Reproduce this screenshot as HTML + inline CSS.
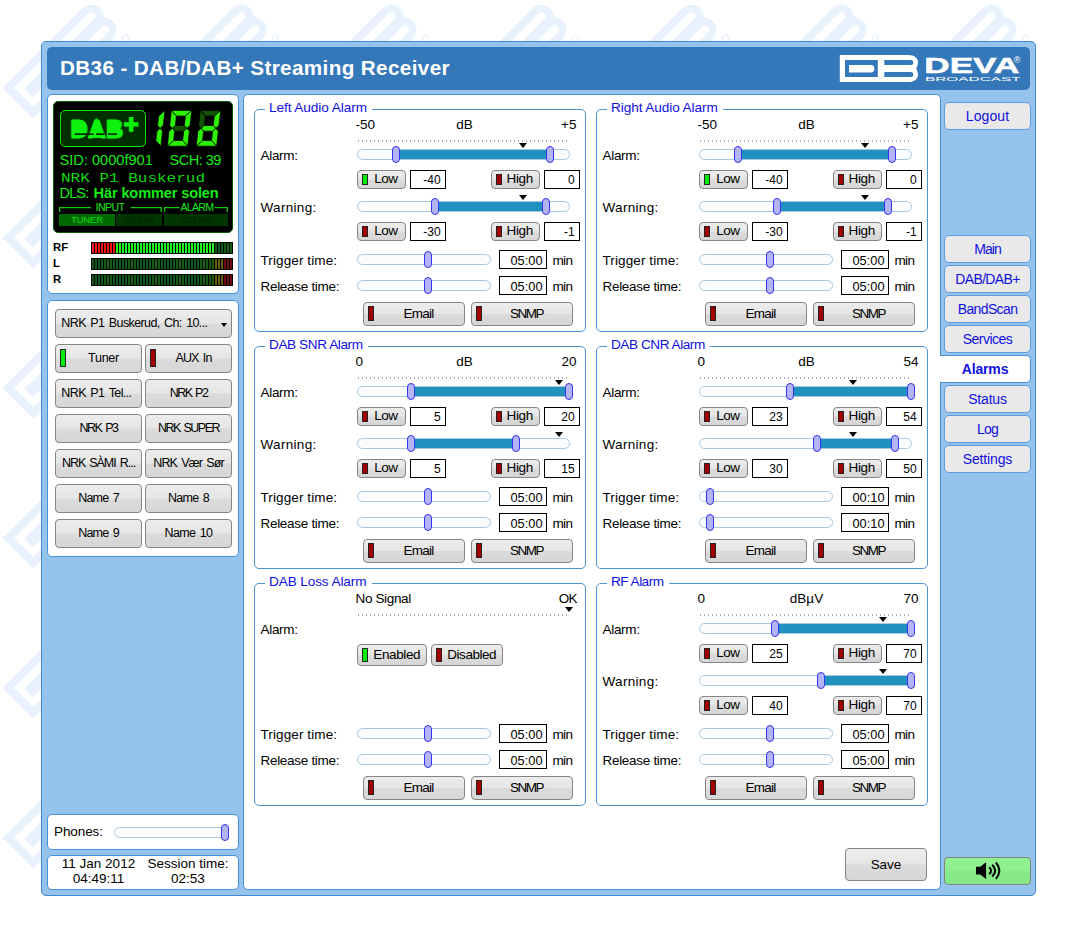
<!DOCTYPE html>
<html lang="en"><head><meta charset="utf-8"><title>DB36 - DAB/DAB+ Streaming Receiver</title>
<style>
*{box-sizing:border-box;margin:0;padding:0}
html,body{width:1077px;height:937px;overflow:hidden;background:#fff}
body{position:relative;font-family:"Liberation Sans",sans-serif;font-size:13.5px;color:#000}
.abs{position:absolute}
.t{position:absolute;white-space:pre;line-height:1}
#wm{position:absolute;left:0;top:0;width:1077px;height:937px}
#frame{position:absolute;left:41px;top:41px;width:995px;height:855px;background:#94c3ec;border:1px solid #4389cf;border-radius:5px}
#hdr{position:absolute;left:47px;top:47px;width:983px;height:43px;background:#3578b9;border-radius:5px}
.panel{position:absolute;background:#fff;border:1px solid #4a90d8;border-radius:5px}
.fs{position:absolute;border:1px solid #4f94d4;border-radius:5px;width:332px;height:223px}
.leg{position:absolute;top:-10.5px;left:10px;height:16px;background:#fff;color:#1010e0;font-size:13.6px;line-height:16px;padding:0 5px 0 4px;white-space:pre}
.btn{position:absolute;border:1px solid #858585;border-radius:4px;background:linear-gradient(#ececec 0%,#e6e6e6 49%,#dbdbdb 51%,#d6d6d6 100%);text-align:center;white-space:pre;overflow:hidden}
.nav{position:absolute;left:944px;width:87px;height:28px;border:1px solid #5d9ce2;border-radius:5px;background:#e9e9e9;color:#1010e0;text-align:center;font-size:14px;line-height:27px;white-space:pre}
.led{position:absolute;border:1px solid #222}
.lg{background:#06ee06}
.lr{background:#a00000}
.track{position:absolute;height:10.5px;margin-top:.3px;border:1px solid #a6c9e2;border-radius:6px;background:#fbfcfd}
.range{position:absolute;height:8.6px;margin-top:.2px;background:#2191c0}
.hnd{position:absolute;width:8px;height:17px;margin-top:-.4px;border:1px solid #3535f0;border-radius:4px;background:#b4b4f8}
.val{position:absolute;border:1px solid #000;background:#fff;height:19px;text-align:right;font-size:12px;line-height:19px;padding-right:4.4px;white-space:pre}
.dots{position:absolute;height:2px;width:210px;background:repeating-linear-gradient(90deg,#555 0,#555 1px,transparent 1px,transparent 4px);opacity:.5}
.mk{position:absolute;width:0;height:0;border-left:4px solid transparent;border-right:4px solid transparent;border-top:5px solid #000}
.lab{position:absolute;white-space:pre;line-height:16px;height:16px}
</style></head>
<body>
<svg id="wm" width="1077" height="937" viewBox="0 0 1077 937">
<defs><pattern id="wmp" x="0" y="0" width="150" height="150" patternUnits="userSpaceOnUse">
<g transform="translate(2.7,88) rotate(-45) scale(1.6) translate(-839.8,-55)" fill="#e9f1fd">
<path fill-rule="evenodd" d="M839.8,55 H908.5 C914.5,55 918,58.3 918,62.3 C918,65.2 916.9,67.2 916.2,68.5 C916.9,69.8 918,71.8 918,74.7 C918,78.7 914.5,82 908.5,82 H839.8 Z M845,60 V76.9 H877.8 V60 Z M884.3,60 V65 H910.8 a2.5,2.5 0 0 0 0,-5 Z M884.3,71.9 V76.9 H910.8 a2.5,2.5 0 0 0 0,-5 Z"/>
<path d="M849,64.9 H870.6 a3.75,3.75 0 0 1 0,7.5 H849 Z"/>
<circle cx="916" cy="87.2" r="2" fill="none" stroke="#e9f1fd" stroke-width="0.7"/>
</g></pattern></defs>
<rect width="1046" height="896" fill="url(#wmp)"/></svg>
<div id="frame"></div>
<div id="hdr"></div>
<div class="t" id="title" style="left:60px;top:56px;font-size:20.7px;font-weight:bold;color:#fff;line-height:24px;letter-spacing:0.36px">DB36 - DAB/DAB+ Streaming Receiver</div>
<svg class="abs" style="left:836px;top:50px" width="192" height="38" viewBox="836 50 192 38">
<g fill="#fff">
<path fill-rule="evenodd" d="M839.8,55 H908.5 C914.5,55 918,58.3 918,62.3 C918,65.2 916.9,67.2 916.2,68.5 C916.9,69.8 918,71.8 918,74.7 C918,78.7 914.5,82 908.5,82 H839.8 Z M845,60 V76.9 H877.8 V60 Z M884.3,60 V65 H910.8 a2.5,2.5 0 0 0 0,-5 Z M884.3,71.9 V76.9 H910.8 a2.5,2.5 0 0 0 0,-5 Z"/>
<path d="M849,64.9 H870.6 a3.75,3.75 0 0 1 0,7.5 H849 Z"/>
<text x="924.3" y="72.6" font-family="Liberation Sans, sans-serif" font-weight="bold" font-size="22.9" stroke="#fff" stroke-width="0.5" textLength="95" lengthAdjust="spacingAndGlyphs">DEVA</text>
<text x="1013.8" y="62.8" font-family="Liberation Sans, sans-serif" font-size="9.2">®</text>
<text x="925" y="81.3" font-family="Liberation Sans, sans-serif" font-size="5.6" textLength="95.6" lengthAdjust="spacingAndGlyphs">BROADCAST</text>
</g></svg>
<div class="panel" style="left:47px;top:94px;width:192px;height:200px"></div>
<div class="abs" style="left:53px;top:101px;width:180px;height:132px;background:#000;border:1px solid #0a5a0a;border-radius:5px"></div>
<div class="abs" style="left:60px;top:110px;width:86px;height:37px;background:#003000;border:1px solid #10e010;border-radius:5px"></div>
<svg class="abs" style="left:60px;top:110px" width="86" height="37" viewBox="60 110 86 37">
<g fill="#0cf20c"><rect x="73" y="122" width="11" height="14"/><rect x="109" y="122" width="11" height="14"/><path d="M96.3,117.8 L106.2,137.9 H87.8 Z"/></g>
<text x="70.2" y="137.8" font-family="Liberation Sans, sans-serif" font-weight="bold" font-size="25" fill="#0cf20c" stroke="#0cf20c" stroke-width="1" stroke-linejoin="round" textLength="53.2" lengthAdjust="spacingAndGlyphs">DAB</text>
<g fill="#002c00"><rect x="74.9" y="133.3" width="12.1" height="1.7"/><rect x="88.7" y="133.3" width="4.9" height="1.7"/><rect x="96.3" y="133.3" width="8" height="1.7"/><rect x="107.9" y="133.3" width="8.9" height="1.7"/></g>
<text x="131.1" y="132.6" text-anchor="middle" font-family="Liberation Sans, sans-serif" font-weight="bold" font-size="25.5" fill="#0cf20c" stroke="#0cf20c" stroke-width="1.5">+</text>
</svg>
<svg class="abs" style="left:150px;top:106px" width="80" height="46" viewBox="150 106 80 46" role="img" aria-label="10d"><g transform="translate(140.5,146.2) skewX(-6.5) translate(0,-35.8)" stroke="#000" stroke-width="0.7" stroke-linejoin="round"><path d="M20.40,0.00 L14.70,5.70 L14.70,15.05 L17.55,17.90 L20.40,15.05 Z" fill="#2cf000"/><path d="M20.40,35.80 L14.70,30.10 L14.70,20.75 L17.55,17.90 L20.40,20.75 Z" fill="#2cf000"/></g><g transform="translate(167.3,146.2) skewX(-6.5) translate(0,-35.8)" stroke="#000" stroke-width="0.7" stroke-linejoin="round"><path d="M2.85,17.90 L5.70,15.05 L14.70,15.05 L17.55,17.90 L14.70,20.75 L5.70,20.75 Z" fill="#125200"/><path d="M0.00,0.00 L20.40,0.00 L14.70,5.70 L5.70,5.70 Z" fill="#2cf000"/><path d="M20.40,0.00 L14.70,5.70 L14.70,15.05 L17.55,17.90 L20.40,15.05 Z" fill="#2cf000"/><path d="M20.40,35.80 L14.70,30.10 L14.70,20.75 L17.55,17.90 L20.40,20.75 Z" fill="#2cf000"/><path d="M0.00,35.80 L20.40,35.80 L14.70,30.10 L5.70,30.10 Z" fill="#2cf000"/><path d="M0.00,35.80 L5.70,30.10 L5.70,20.75 L2.85,17.90 L0.00,20.75 Z" fill="#2cf000"/><path d="M0.00,0.00 L5.70,5.70 L5.70,15.05 L2.85,17.90 L0.00,15.05 Z" fill="#2cf000"/></g><g transform="translate(196.2,146.2) skewX(-6.5) translate(0,-35.8)" stroke="#000" stroke-width="0.7" stroke-linejoin="round"><path d="M0.00,0.00 L20.40,0.00 L14.70,5.70 L5.70,5.70 Z" fill="#125200"/><path d="M0.00,0.00 L5.70,5.70 L5.70,15.05 L2.85,17.90 L0.00,15.05 Z" fill="#125200"/><path d="M20.40,0.00 L14.70,5.70 L14.70,15.05 L17.55,17.90 L20.40,15.05 Z" fill="#2cf000"/><path d="M20.40,35.80 L14.70,30.10 L14.70,20.75 L17.55,17.90 L20.40,20.75 Z" fill="#2cf000"/><path d="M0.00,35.80 L20.40,35.80 L14.70,30.10 L5.70,30.10 Z" fill="#2cf000"/><path d="M0.00,35.80 L5.70,30.10 L5.70,20.75 L2.85,17.90 L0.00,20.75 Z" fill="#2cf000"/><path d="M2.85,17.90 L5.70,15.05 L14.70,15.05 L17.55,17.90 L14.70,20.75 L5.70,20.75 Z" fill="#2cf000"/></g></svg>
<div class="t" id="sid" style="left:59.5px;top:152px;font-size:14.6px;line-height:16px;color:#14ea14">SID: 0000f901</div>
<div class="t" id="sch" style="left:169.5px;top:152px;font-size:14.6px;line-height:16px;letter-spacing:-0.55px;color:#14ea14">SCH: 39</div>
<div class="t" id="svc" style="left:61px;top:170px;font-family:'Liberation Mono',monospace;font-size:16px;line-height:17px;transform-origin:0 12.6px;transform:scaleY(.82);color:#10d810">NRK P1 Buskerud</div>
<div class="t" id="dls" style="left:59.5px;top:185px;font-size:14.6px;line-height:16px;color:#14ea14"><span style="letter-spacing:-0.9px">DLS:</span> <b id="dlsb" style="letter-spacing:-0.15px;margin-left:1.2px">Här kommer solen</b></div>
<svg class="abs" style="left:55px;top:204px" width="178" height="10" viewBox="55 204 178 10" fill="none" stroke="#10c810" stroke-width="1.3">
<path d="M59.6,212 V207.7 H91"/><path d="M130.5,207.7 H161.2 V212"/><path d="M164.6,212 V207.7 H179.5"/><path d="M214.5,207.7 H227.2 V212"/></svg>
<div class="t" id="inp" style="left:95.5px;top:201.6px;font-size:10.6px;letter-spacing:-0.55px;line-height:11px;color:#14ea14">INPUT</div>
<div class="t" id="alm" style="left:180.5px;top:201.6px;font-size:10.6px;letter-spacing:-0.75px;line-height:11px;color:#14ea14">ALARM</div>
<div class="abs" id="b_tuner" style="left:59px;top:214px;width:56px;height:12px;background:#006800;color:#10e010;font-size:9.2px;line-height:12.5px;text-align:center;white-space:pre">TUNER</div>
<div class="abs" id="b_aux" style="left:116px;top:214px;width:46px;height:12px;background:#003400;color:#002600;font-size:9.2px;line-height:12.5px;text-align:center;white-space:pre">AUX IN</div>
<div class="abs" id="b_act" style="left:164px;top:214px;width:64px;height:12px;background:#003400;color:#002600;font-size:9.2px;line-height:12.5px;text-align:center;white-space:pre">ACTIVE</div>
<div class="abs" style="left:91px;top:242px;width:142px;height:12px;background:#000"></div><div class="abs" style="left:92px;top:243px;width:24px;height:10px;background:repeating-linear-gradient(90deg,#ff1010 0,#ff1010 2px,#000 2px,#000 3px)"></div><div class="abs" style="left:116px;top:243px;width:99px;height:10px;background:repeating-linear-gradient(90deg,#22ff22 0,#22ff22 2px,#000 2px,#000 3px)"></div><div class="abs" style="left:215px;top:243px;width:18px;height:10px;background:repeating-linear-gradient(90deg,#0e5a0e 0,#0e5a0e 2px,#000 2px,#000 3px)"></div>
<div class="abs" style="left:91px;top:258px;width:142px;height:12px;background:#000"></div><div class="abs" style="left:92px;top:259px;width:123px;height:10px;background:repeating-linear-gradient(90deg,#0e5a0e 0,#0e5a0e 2px,#000 2px,#000 3px)"></div><div class="abs" style="left:215px;top:259px;width:9px;height:10px;background:repeating-linear-gradient(90deg,#6a5a0a 0,#6a5a0a 2px,#000 2px,#000 3px)"></div><div class="abs" style="left:224px;top:259px;width:9px;height:10px;background:repeating-linear-gradient(90deg,#6a0e0e 0,#6a0e0e 2px,#000 2px,#000 3px)"></div>
<div class="abs" style="left:91px;top:274px;width:142px;height:12px;background:#000"></div><div class="abs" style="left:92px;top:275px;width:123px;height:10px;background:repeating-linear-gradient(90deg,#0e5a0e 0,#0e5a0e 2px,#000 2px,#000 3px)"></div><div class="abs" style="left:215px;top:275px;width:9px;height:10px;background:repeating-linear-gradient(90deg,#6a5a0a 0,#6a5a0a 2px,#000 2px,#000 3px)"></div><div class="abs" style="left:224px;top:275px;width:9px;height:10px;background:repeating-linear-gradient(90deg,#6a0e0e 0,#6a0e0e 2px,#000 2px,#000 3px)"></div>
<div class="t" style="left:53px;top:241px;font-size:11.3px;font-weight:bold;line-height:13px">RF</div>
<div class="t" style="left:53px;top:257px;font-size:11.3px;font-weight:bold;line-height:13px">L</div>
<div class="t" style="left:53px;top:273px;font-size:11.3px;font-weight:bold;line-height:13px">R</div>
<div class="panel" style="left:47px;top:300px;width:192px;height:257px"></div>
<div class="btn" style="left:55px;top:309px;width:177px;height:29px;font-size:12.5px;word-spacing:1.6px;letter-spacing:-0.612px;line-height:27px;text-align:left;padding-left:5.3px">NRK P1 Buskerud, Ch: 10...</div>
<div class="mk" style="left:220.5px;top:322.5px;border-left-width:3.5px;border-right-width:3.5px;border-top-width:4.5px"></div>
<div class="btn" style="left:55px;top:344px;width:87px;height:29px;font-size:12.5px;line-height:27px;word-spacing:1.6px;letter-spacing:-0.238px;padding-left:10px;">Tuner</div>
<div class="btn" style="left:145px;top:344px;width:87px;height:29px;font-size:12.5px;line-height:27px;word-spacing:1.6px;letter-spacing:-0.842px;padding-left:10px;">AUX In</div>
<div class="btn" style="left:55px;top:379px;width:87px;height:29px;font-size:12.5px;line-height:27px;word-spacing:1.6px;letter-spacing:-0.605px;text-align:left;padding-left:5.3px;">NRK P1 Tel...</div>
<div class="btn" style="left:145px;top:379px;width:87px;height:29px;font-size:12.5px;line-height:27px;word-spacing:1.6px;letter-spacing:-1.501px;">NRK P2</div>
<div class="btn" style="left:55px;top:414px;width:87px;height:29px;font-size:12.5px;line-height:27px;word-spacing:1.6px;letter-spacing:-1.451px;">NRK P3</div>
<div class="btn" style="left:145px;top:414px;width:87px;height:29px;font-size:12.5px;line-height:27px;word-spacing:1.6px;letter-spacing:-1.505px;">NRK SUPER</div>
<div class="btn" style="left:55px;top:449px;width:87px;height:29px;font-size:12.5px;line-height:27px;word-spacing:1.6px;letter-spacing:-1.024px;">NRK SÀMI R...</div>
<div class="btn" style="left:145px;top:449px;width:87px;height:29px;font-size:12.5px;line-height:27px;word-spacing:1.6px;letter-spacing:-0.904px;">NRK Vær Sør</div>
<div class="btn" style="left:55px;top:484px;width:87px;height:29px;font-size:12.5px;line-height:27px;word-spacing:1.6px;letter-spacing:-0.776px;">Name 7</div>
<div class="btn" style="left:145px;top:484px;width:87px;height:29px;font-size:12.5px;line-height:27px;word-spacing:1.6px;letter-spacing:-0.726px;">Name 8</div>
<div class="btn" style="left:55px;top:519px;width:87px;height:29px;font-size:12.5px;line-height:27px;word-spacing:1.6px;letter-spacing:-0.776px;">Name 9</div>
<div class="btn" style="left:145px;top:519px;width:87px;height:29px;font-size:12.5px;line-height:27px;word-spacing:1.6px;letter-spacing:-0.639px;">Name 10</div>
<div class="led lg" style="left:60px;top:349px;width:6.4px;height:18px"></div>
<div class="led lr" style="left:150px;top:349px;width:6.4px;height:18px"></div>
<div class="panel" style="left:47px;top:814px;width:192px;height:36px"></div>
<div class="lab" style="left:54px;top:823.5px;letter-spacing:-0.091px">Phones:</div>
<div class="track" style="left:114px;top:827px;width:114px"></div><div class="hnd" style="left:221px;top:824px"></div>
<div class="panel" style="left:47px;top:855px;width:192px;height:35px"></div>
<div class="abs" id="dt" style="left:53px;top:856.4px;width:91px;text-align:center;line-height:15px;white-space:pre">11 Jan 2012
04:49:11</div>
<div class="abs" id="st" style="left:143px;top:856.4px;width:90px;text-align:center;line-height:15px;white-space:pre">Session time:
02:53</div>
<div class="panel" style="left:243px;top:94px;width:698px;height:796px"></div>
<div class="fs" style="left:254px;top:109px"><div class="leg" style="width:107px;letter-spacing:-0.067px">Left Audio Alarm</div></div>
<div class="lab" style="left:355.5px;top:117px">-50</div><div class="lab" style="left:414.5px;top:117px;width:100px;text-align:center">dB</div><div class="lab" style="left:476.5px;top:117px;width:100px;text-align:right">+5</div>
<div class="dots" style="left:358px;top:139.8px"></div>
<div class="lab" style="left:260.5px;top:148px;letter-spacing:-0.303px">Alarm:</div>
<div class="track" style="left:357px;top:149px;width:213px"></div><div class="range" style="left:396.4px;top:150px;width:153.5px"></div><div class="hnd" style="left:392.4px;top:146px"></div><div class="hnd" style="left:545.8px;top:146px"></div><div class="mk" style="left:518.5px;top:143px"></div>
<div class="btn" style="left:357px;top:170px;width:49px;height:19px;line-height:16.5px;text-align:left;padding-left:16.2px;letter-spacing:-0.508px">Low</div><div class="led lg" style="left:362px;top:174px;width:6px;height:11px"></div><div class="val" style="left:410px;top:170px;width:36px">-40</div><div class="btn" style="left:491px;top:170px;width:49px;height:19px;line-height:16.5px;text-align:left;padding-left:14.5px;letter-spacing:-0.339px">High</div><div class="led lr" style="left:496px;top:174px;width:6px;height:11px"></div><div class="val" style="left:544px;top:170px;width:36px">0</div>
<div class="lab" style="left:260.5px;top:200px;letter-spacing:0.317px">Warning:</div>
<div class="track" style="left:357px;top:201px;width:213px"></div><div class="range" style="left:434.7px;top:202px;width:111.3px"></div><div class="hnd" style="left:430.7px;top:198px"></div><div class="hnd" style="left:542.0px;top:198px"></div><div class="mk" style="left:518.5px;top:195px"></div>
<div class="btn" style="left:357px;top:222px;width:49px;height:19px;line-height:16.5px;text-align:left;padding-left:16.2px;letter-spacing:-0.508px">Low</div><div class="led lr" style="left:362px;top:226px;width:6px;height:11px"></div><div class="val" style="left:410px;top:222px;width:36px">-30</div><div class="btn" style="left:491px;top:222px;width:49px;height:19px;line-height:16.5px;text-align:left;padding-left:14.5px;letter-spacing:-0.339px">High</div><div class="led lr" style="left:496px;top:226px;width:6px;height:11px"></div><div class="val" style="left:544px;top:222px;width:36px">-1</div>
<div class="lab" style="left:260.5px;top:252.5px;letter-spacing:0.103px">Trigger time:</div><div class="track" style="left:357px;top:254px;width:134px"></div><div class="hnd" style="left:424.4px;top:251px"></div>
<div class="val" style="left:499px;top:250px;width:48px;padding-right:3.5px;font-size:12.8px">05:00</div><div class="lab" style="left:552.5px;top:252.5px;letter-spacing:-0.633px">min</div>
<div class="lab" style="left:260.5px;top:278.5px;letter-spacing:-0.296px">Release time:</div><div class="track" style="left:357px;top:280px;width:134px"></div><div class="hnd" style="left:424.4px;top:277px"></div>
<div class="val" style="left:499px;top:276px;width:48px;padding-right:3.5px;font-size:12.8px">05:00</div><div class="lab" style="left:552.5px;top:278.5px;letter-spacing:-0.633px">min</div>
<div class="btn" style="left:363px;top:302px;width:102px;height:24px;line-height:22px;padding-left:9px;letter-spacing:-0.754px">Email</div><div class="led lr" style="left:368px;top:306px;width:6px;height:15px"></div><div class="btn" style="left:471px;top:302px;width:102px;height:24px;line-height:22px;padding-left:9px;letter-spacing:-1.505px">SNMP</div><div class="led lr" style="left:476px;top:306px;width:6px;height:15px"></div>
<div class="fs" style="left:596px;top:109px"><div class="leg" style="width:115.75px;letter-spacing:-0.082px">Right Audio Alarm</div></div>
<div class="lab" style="left:697.5px;top:117px">-50</div><div class="lab" style="left:756.5px;top:117px;width:100px;text-align:center">dB</div><div class="lab" style="left:818.5px;top:117px;width:100px;text-align:right">+5</div>
<div class="dots" style="left:700px;top:139.8px"></div>
<div class="lab" style="left:602.5px;top:148px;letter-spacing:-0.303px">Alarm:</div>
<div class="track" style="left:699px;top:149px;width:213px"></div><div class="range" style="left:738.4px;top:150px;width:153.5px"></div><div class="hnd" style="left:734.4px;top:146px"></div><div class="hnd" style="left:887.8px;top:146px"></div><div class="mk" style="left:860.5px;top:143px"></div>
<div class="btn" style="left:699px;top:170px;width:49px;height:19px;line-height:16.5px;text-align:left;padding-left:16.2px;letter-spacing:-0.508px">Low</div><div class="led lg" style="left:704px;top:174px;width:6px;height:11px"></div><div class="val" style="left:752px;top:170px;width:36px">-40</div><div class="btn" style="left:833px;top:170px;width:49px;height:19px;line-height:16.5px;text-align:left;padding-left:14.5px;letter-spacing:-0.339px">High</div><div class="led lr" style="left:838px;top:174px;width:6px;height:11px"></div><div class="val" style="left:886px;top:170px;width:36px">0</div>
<div class="lab" style="left:602.5px;top:200px;letter-spacing:0.317px">Warning:</div>
<div class="track" style="left:699px;top:201px;width:213px"></div><div class="range" style="left:776.7px;top:202px;width:111.3px"></div><div class="hnd" style="left:772.7px;top:198px"></div><div class="hnd" style="left:884.0px;top:198px"></div><div class="mk" style="left:860.5px;top:195px"></div>
<div class="btn" style="left:699px;top:222px;width:49px;height:19px;line-height:16.5px;text-align:left;padding-left:16.2px;letter-spacing:-0.508px">Low</div><div class="led lr" style="left:704px;top:226px;width:6px;height:11px"></div><div class="val" style="left:752px;top:222px;width:36px">-30</div><div class="btn" style="left:833px;top:222px;width:49px;height:19px;line-height:16.5px;text-align:left;padding-left:14.5px;letter-spacing:-0.339px">High</div><div class="led lr" style="left:838px;top:226px;width:6px;height:11px"></div><div class="val" style="left:886px;top:222px;width:36px">-1</div>
<div class="lab" style="left:602.5px;top:252.5px;letter-spacing:0.103px">Trigger time:</div><div class="track" style="left:699px;top:254px;width:134px"></div><div class="hnd" style="left:766.4px;top:251px"></div>
<div class="val" style="left:841px;top:250px;width:48px;padding-right:3.5px;font-size:12.8px">05:00</div><div class="lab" style="left:894.5px;top:252.5px;letter-spacing:-0.633px">min</div>
<div class="lab" style="left:602.5px;top:278.5px;letter-spacing:-0.296px">Release time:</div><div class="track" style="left:699px;top:280px;width:134px"></div><div class="hnd" style="left:766.4px;top:277px"></div>
<div class="val" style="left:841px;top:276px;width:48px;padding-right:3.5px;font-size:12.8px">05:00</div><div class="lab" style="left:894.5px;top:278.5px;letter-spacing:-0.633px">min</div>
<div class="btn" style="left:705px;top:302px;width:102px;height:24px;line-height:22px;padding-left:9px;letter-spacing:-0.754px">Email</div><div class="led lr" style="left:710px;top:306px;width:6px;height:15px"></div><div class="btn" style="left:813px;top:302px;width:102px;height:24px;line-height:22px;padding-left:9px;letter-spacing:-1.505px">SNMP</div><div class="led lr" style="left:818px;top:306px;width:6px;height:15px"></div>
<div class="fs" style="left:254px;top:346px"><div class="leg" style="width:103px;letter-spacing:-0.413px">DAB SNR Alarm</div></div>
<div class="lab" style="left:355.5px;top:354px">0</div><div class="lab" style="left:414.5px;top:354px;width:100px;text-align:center">dB</div><div class="lab" style="left:476.5px;top:354px;width:100px;text-align:right">20</div>
<div class="dots" style="left:358px;top:376.8px"></div>
<div class="lab" style="left:260.5px;top:385px;letter-spacing:-0.303px">Alarm:</div>
<div class="track" style="left:357px;top:386px;width:213px"></div><div class="range" style="left:410.8px;top:387px;width:158.2px"></div><div class="hnd" style="left:406.8px;top:383px"></div><div class="hnd" style="left:565.0px;top:383px"></div><div class="mk" style="left:554.8px;top:380px"></div>
<div class="btn" style="left:357px;top:407px;width:49px;height:19px;line-height:16.5px;text-align:left;padding-left:16.2px;letter-spacing:-0.508px">Low</div><div class="led lr" style="left:362px;top:411px;width:6px;height:11px"></div><div class="val" style="left:410px;top:407px;width:36px">5</div><div class="btn" style="left:491px;top:407px;width:49px;height:19px;line-height:16.5px;text-align:left;padding-left:14.5px;letter-spacing:-0.339px">High</div><div class="led lr" style="left:496px;top:411px;width:6px;height:11px"></div><div class="val" style="left:544px;top:407px;width:36px">20</div>
<div class="lab" style="left:260.5px;top:437px;letter-spacing:0.317px">Warning:</div>
<div class="track" style="left:357px;top:438px;width:213px"></div><div class="range" style="left:410.8px;top:439px;width:105.5px"></div><div class="hnd" style="left:406.8px;top:435px"></div><div class="hnd" style="left:512.2px;top:435px"></div><div class="mk" style="left:554.8px;top:432px"></div>
<div class="btn" style="left:357px;top:459px;width:49px;height:19px;line-height:16.5px;text-align:left;padding-left:16.2px;letter-spacing:-0.508px">Low</div><div class="led lr" style="left:362px;top:463px;width:6px;height:11px"></div><div class="val" style="left:410px;top:459px;width:36px">5</div><div class="btn" style="left:491px;top:459px;width:49px;height:19px;line-height:16.5px;text-align:left;padding-left:14.5px;letter-spacing:-0.339px">High</div><div class="led lr" style="left:496px;top:463px;width:6px;height:11px"></div><div class="val" style="left:544px;top:459px;width:36px">15</div>
<div class="lab" style="left:260.5px;top:489.5px;letter-spacing:0.103px">Trigger time:</div><div class="track" style="left:357px;top:491px;width:134px"></div><div class="hnd" style="left:424.4px;top:488px"></div>
<div class="val" style="left:499px;top:487px;width:48px;padding-right:3.5px;font-size:12.8px">05:00</div><div class="lab" style="left:552.5px;top:489.5px;letter-spacing:-0.633px">min</div>
<div class="lab" style="left:260.5px;top:515.5px;letter-spacing:-0.296px">Release time:</div><div class="track" style="left:357px;top:517px;width:134px"></div><div class="hnd" style="left:424.4px;top:514px"></div>
<div class="val" style="left:499px;top:513px;width:48px;padding-right:3.5px;font-size:12.8px">05:00</div><div class="lab" style="left:552.5px;top:515.5px;letter-spacing:-0.633px">min</div>
<div class="btn" style="left:363px;top:539px;width:102px;height:24px;line-height:22px;padding-left:9px;letter-spacing:-0.754px">Email</div><div class="led lr" style="left:368px;top:543px;width:6px;height:15px"></div><div class="btn" style="left:471px;top:539px;width:102px;height:24px;line-height:22px;padding-left:9px;letter-spacing:-1.505px">SNMP</div><div class="led lr" style="left:476px;top:543px;width:6px;height:15px"></div>
<div class="fs" style="left:596px;top:346px"><div class="leg" style="width:103.25px;letter-spacing:-0.454px">DAB CNR Alarm</div></div>
<div class="lab" style="left:697.5px;top:354px">0</div><div class="lab" style="left:756.5px;top:354px;width:100px;text-align:center">dB</div><div class="lab" style="left:818.5px;top:354px;width:100px;text-align:right">54</div>
<div class="dots" style="left:700px;top:376.8px"></div>
<div class="lab" style="left:602.5px;top:385px;letter-spacing:-0.303px">Alarm:</div>
<div class="track" style="left:699px;top:386px;width:213px"></div><div class="range" style="left:789.9px;top:387px;width:121.1px"></div><div class="hnd" style="left:785.9px;top:383px"></div><div class="hnd" style="left:907.0px;top:383px"></div><div class="mk" style="left:848.5px;top:380px"></div>
<div class="btn" style="left:699px;top:407px;width:49px;height:19px;line-height:16.5px;text-align:left;padding-left:16.2px;letter-spacing:-0.508px">Low</div><div class="led lr" style="left:704px;top:411px;width:6px;height:11px"></div><div class="val" style="left:752px;top:407px;width:36px">23</div><div class="btn" style="left:833px;top:407px;width:49px;height:19px;line-height:16.5px;text-align:left;padding-left:14.5px;letter-spacing:-0.339px">High</div><div class="led lr" style="left:838px;top:411px;width:6px;height:11px"></div><div class="val" style="left:886px;top:407px;width:36px">54</div>
<div class="lab" style="left:602.5px;top:437px;letter-spacing:0.317px">Warning:</div>
<div class="track" style="left:699px;top:438px;width:213px"></div><div class="range" style="left:817.2px;top:439px;width:78.1px"></div><div class="hnd" style="left:813.2px;top:435px"></div><div class="hnd" style="left:891.4px;top:435px"></div><div class="mk" style="left:848.5px;top:432px"></div>
<div class="btn" style="left:699px;top:459px;width:49px;height:19px;line-height:16.5px;text-align:left;padding-left:16.2px;letter-spacing:-0.508px">Low</div><div class="led lr" style="left:704px;top:463px;width:6px;height:11px"></div><div class="val" style="left:752px;top:459px;width:36px">30</div><div class="btn" style="left:833px;top:459px;width:49px;height:19px;line-height:16.5px;text-align:left;padding-left:14.5px;letter-spacing:-0.339px">High</div><div class="led lr" style="left:838px;top:463px;width:6px;height:11px"></div><div class="val" style="left:886px;top:459px;width:36px">50</div>
<div class="lab" style="left:602.5px;top:489.5px;letter-spacing:0.103px">Trigger time:</div><div class="track" style="left:699px;top:491px;width:134px"></div><div class="hnd" style="left:705.5px;top:488px"></div>
<div class="val" style="left:841px;top:487px;width:48px;padding-right:3.5px;font-size:12.8px">00:10</div><div class="lab" style="left:894.5px;top:489.5px;letter-spacing:-0.633px">min</div>
<div class="lab" style="left:602.5px;top:515.5px;letter-spacing:-0.296px">Release time:</div><div class="track" style="left:699px;top:517px;width:134px"></div><div class="hnd" style="left:705.5px;top:514px"></div>
<div class="val" style="left:841px;top:513px;width:48px;padding-right:3.5px;font-size:12.8px">00:10</div><div class="lab" style="left:894.5px;top:515.5px;letter-spacing:-0.633px">min</div>
<div class="btn" style="left:705px;top:539px;width:102px;height:24px;line-height:22px;padding-left:9px;letter-spacing:-0.754px">Email</div><div class="led lr" style="left:710px;top:543px;width:6px;height:15px"></div><div class="btn" style="left:813px;top:539px;width:102px;height:24px;line-height:22px;padding-left:9px;letter-spacing:-1.505px">SNMP</div><div class="led lr" style="left:818px;top:543px;width:6px;height:15px"></div>
<div class="fs" style="left:254px;top:583px"><div class="leg" style="width:106.5px;letter-spacing:-0.113px">DAB Loss Alarm</div></div>
<div class="lab" style="left:355.5px;top:591px;letter-spacing:-0.35px">No Signal</div><div class="lab" style="left:476.5px;top:591px;width:100px;text-align:right;letter-spacing:-0.916px">OK</div>
<div class="dots" style="left:358px;top:613.8px"></div>
<div class="lab" style="left:260.5px;top:622px;letter-spacing:-0.303px">Alarm:</div>
<div class="mk" style="left:564.5px;top:606.6px"></div>
<div class="btn" style="left:357px;top:644px;width:70px;height:22px;line-height:20px;text-align:left;padding-left:15.3px;letter-spacing:-0.383px">Enabled</div><div class="led lg" style="left:362px;top:648px;width:6px;height:14px"></div><div class="btn" style="left:431px;top:644px;width:72px;height:22px;line-height:20px;text-align:left;padding-left:15.3px;letter-spacing:-0.469px">Disabled</div><div class="led lr" style="left:436px;top:648px;width:6px;height:14px"></div>
<div class="lab" style="left:260.5px;top:726.5px;letter-spacing:0.103px">Trigger time:</div><div class="track" style="left:357px;top:728px;width:134px"></div><div class="hnd" style="left:424.4px;top:725px"></div>
<div class="val" style="left:499px;top:724px;width:48px;padding-right:3.5px;font-size:12.8px">05:00</div><div class="lab" style="left:552.5px;top:726.5px;letter-spacing:-0.633px">min</div>
<div class="lab" style="left:260.5px;top:752.5px;letter-spacing:-0.296px">Release time:</div><div class="track" style="left:357px;top:754px;width:134px"></div><div class="hnd" style="left:424.4px;top:751px"></div>
<div class="val" style="left:499px;top:750px;width:48px;padding-right:3.5px;font-size:12.8px">05:00</div><div class="lab" style="left:552.5px;top:752.5px;letter-spacing:-0.633px">min</div>
<div class="btn" style="left:363px;top:776px;width:102px;height:24px;line-height:22px;padding-left:9px;letter-spacing:-0.754px">Email</div><div class="led lr" style="left:368px;top:780px;width:6px;height:15px"></div><div class="btn" style="left:471px;top:776px;width:102px;height:24px;line-height:22px;padding-left:9px;letter-spacing:-1.505px">SNMP</div><div class="led lr" style="left:476px;top:780px;width:6px;height:15px"></div>
<div class="fs" style="left:596px;top:583px"><div class="leg" style="width:62px;letter-spacing:-0.522px">RF Alarm</div></div>
<div class="lab" style="left:697.5px;top:591px">0</div><div class="lab" style="left:756.5px;top:591px;width:100px;text-align:center">dBµV</div><div class="lab" style="left:818.5px;top:591px;width:100px;text-align:right">70</div>
<div class="dots" style="left:700px;top:613.8px"></div>
<div class="lab" style="left:602.5px;top:622px;letter-spacing:-0.303px">Alarm:</div>
<div class="track" style="left:699px;top:623px;width:213px"></div><div class="range" style="left:775.4px;top:624px;width:135.6px"></div><div class="hnd" style="left:771.4px;top:620px"></div><div class="hnd" style="left:907.0px;top:620px"></div><div class="mk" style="left:878.5px;top:617px"></div>
<div class="btn" style="left:699px;top:644px;width:49px;height:19px;line-height:16.5px;text-align:left;padding-left:16.2px;letter-spacing:-0.508px">Low</div><div class="led lr" style="left:704px;top:648px;width:6px;height:11px"></div><div class="val" style="left:752px;top:644px;width:36px">25</div><div class="btn" style="left:833px;top:644px;width:49px;height:19px;line-height:16.5px;text-align:left;padding-left:14.5px;letter-spacing:-0.339px">High</div><div class="led lr" style="left:838px;top:648px;width:6px;height:11px"></div><div class="val" style="left:886px;top:644px;width:36px">70</div>
<div class="lab" style="left:602.5px;top:674px;letter-spacing:0.317px">Warning:</div>
<div class="track" style="left:699px;top:675px;width:213px"></div><div class="range" style="left:820.6px;top:676px;width:90.4px"></div><div class="hnd" style="left:816.6px;top:672px"></div><div class="hnd" style="left:907.0px;top:672px"></div><div class="mk" style="left:878.5px;top:669px"></div>
<div class="btn" style="left:699px;top:696px;width:49px;height:19px;line-height:16.5px;text-align:left;padding-left:16.2px;letter-spacing:-0.508px">Low</div><div class="led lr" style="left:704px;top:700px;width:6px;height:11px"></div><div class="val" style="left:752px;top:696px;width:36px">40</div><div class="btn" style="left:833px;top:696px;width:49px;height:19px;line-height:16.5px;text-align:left;padding-left:14.5px;letter-spacing:-0.339px">High</div><div class="led lr" style="left:838px;top:700px;width:6px;height:11px"></div><div class="val" style="left:886px;top:696px;width:36px">70</div>
<div class="lab" style="left:602.5px;top:726.5px;letter-spacing:0.103px">Trigger time:</div><div class="track" style="left:699px;top:728px;width:134px"></div><div class="hnd" style="left:766.4px;top:725px"></div>
<div class="val" style="left:841px;top:724px;width:48px;padding-right:3.5px;font-size:12.8px">05:00</div><div class="lab" style="left:894.5px;top:726.5px;letter-spacing:-0.633px">min</div>
<div class="lab" style="left:602.5px;top:752.5px;letter-spacing:-0.296px">Release time:</div><div class="track" style="left:699px;top:754px;width:134px"></div><div class="hnd" style="left:766.4px;top:751px"></div>
<div class="val" style="left:841px;top:750px;width:48px;padding-right:3.5px;font-size:12.8px">05:00</div><div class="lab" style="left:894.5px;top:752.5px;letter-spacing:-0.633px">min</div>
<div class="btn" style="left:705px;top:776px;width:102px;height:24px;line-height:22px;padding-left:9px;letter-spacing:-0.754px">Email</div><div class="led lr" style="left:710px;top:780px;width:6px;height:15px"></div><div class="btn" style="left:813px;top:776px;width:102px;height:24px;line-height:22px;padding-left:9px;letter-spacing:-1.505px">SNMP</div><div class="led lr" style="left:818px;top:780px;width:6px;height:15px"></div>
<div class="btn" style="left:845px;top:848px;width:82px;height:33px;line-height:31px;letter-spacing:-0.01px">Save</div>
<div class="nav" style="top:102px;letter-spacing:0.084px">Logout</div>
<div class="nav" style="top:235px;letter-spacing:-0.953px">Main</div>
<div class="nav" style="top:265px;letter-spacing:-0.663px">DAB/DAB+</div>
<div class="nav" style="top:295px;letter-spacing:-0.623px">BandScan</div>
<div class="nav" style="top:325px;letter-spacing:-0.527px">Services</div>
<div class="nav" style="top:355px;left:940px;width:91px;background:#fff;border-color:#4a90d8;border-left:0;border-radius:0 5px 5px 0;font-weight:bold;padding-left:0px;letter-spacing:-0.144px">Alarms</div>
<div class="nav" style="top:385px;letter-spacing:-0.191px">Status</div>
<div class="nav" style="top:415px;letter-spacing:-0.805px">Log</div>
<div class="nav" style="top:445px;letter-spacing:-0.142px">Settings</div>
<div class="abs" style="left:944px;top:857px;width:87px;height:28px;border:1px solid #7d857d;border-radius:4px;background:linear-gradient(#92f292 0%,#8fef8f 49%,#86e886 51%,#85e785 100%)"></div>
<svg class="abs" style="left:974px;top:860px" width="30" height="22" viewBox="974 860 30 22">
<path d="M976,866.7 H980.2 L986.1,862.2 V879 L980.2,874.4 H976 Z" fill="#000"/>
<g fill="none" stroke="#000" stroke-width="2">
<path d="M989.2,867.3 Q992.9,870.6 989.2,874"/><path d="M992.2,864.8 Q998,870.6 992.2,876.5"/><path d="M995.9,862.5 Q1002.8,870.6 995.9,878.8"/></g></svg>
</body></html>
